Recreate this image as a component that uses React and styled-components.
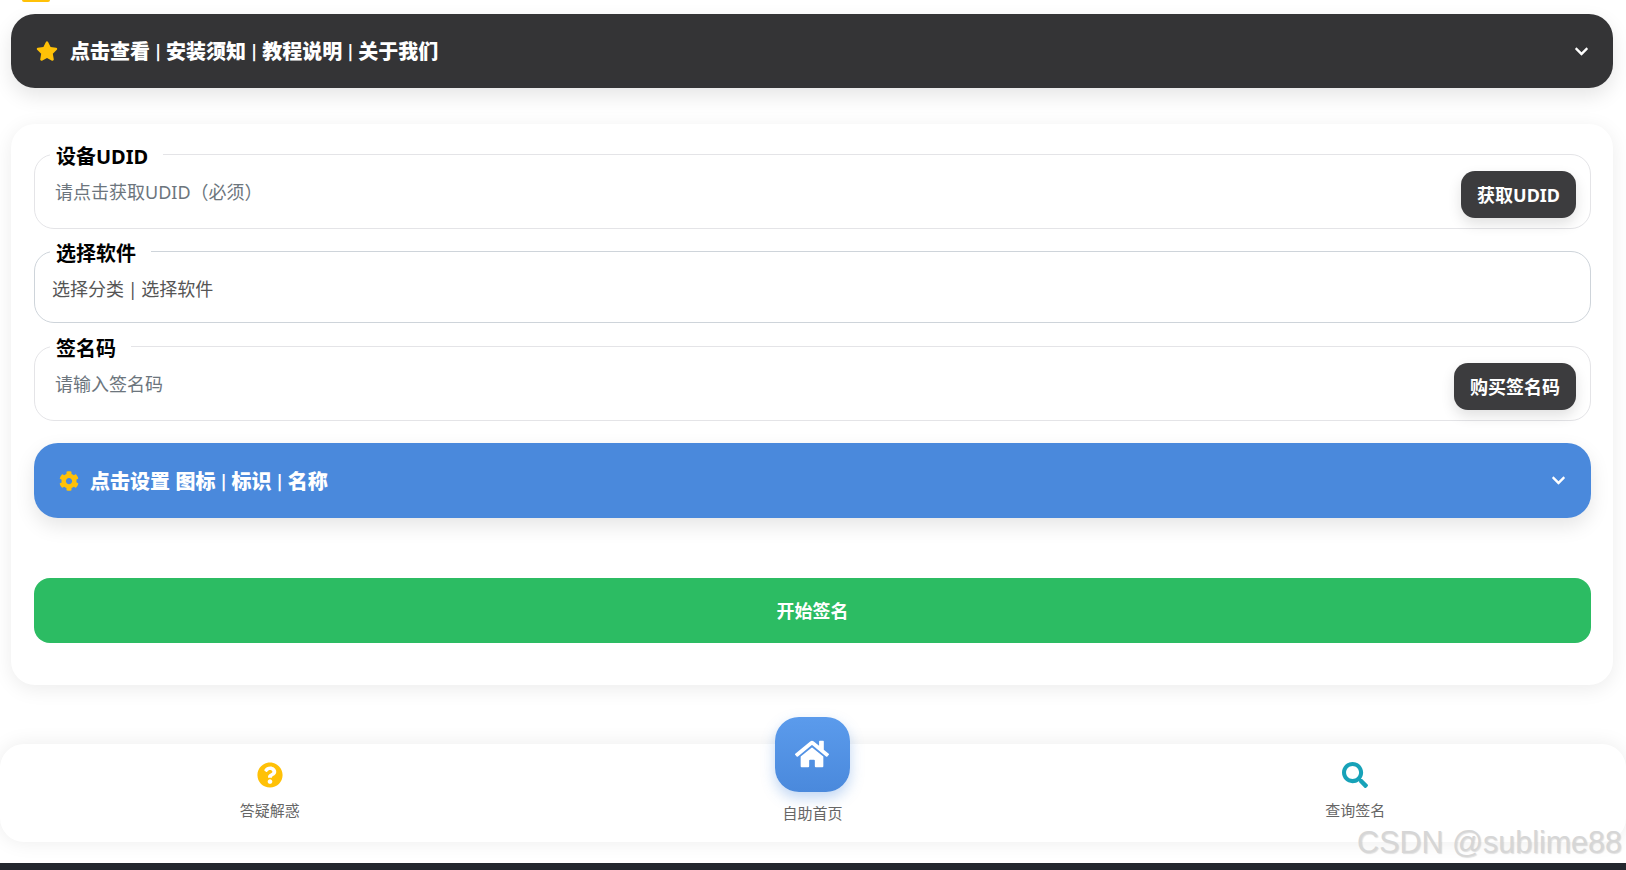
import React from 'react';
import styled, { createGlobalStyle } from 'styled-components';
import { FaChevronDown, FaCog, FaHome, FaQuestionCircle, FaSearch, FaStar } from 'react-icons/fa';

const GlobalStyle = createGlobalStyle`
  html, body {
    margin: 0;
    padding: 0;
    height: 100%;
    overflow: hidden;
    background: #fff;
  }
  body {
    font-family: 'Noto Sans', 'Noto Sans CJK SC', sans-serif;
  }
  * {
    box-sizing: border-box;
  }
`;

const Page = styled.div`
  position: relative;
  display: flex;
  flex-direction: column;
  height: 870px;
  overflow: hidden;
`;

const TopChip = styled.div`
  width: 28px;
  height: 2px;
  margin-left: 22px;
  border-radius: 0 0 4px 4px;
  background: #ffc107;
`;

const Accordion = styled.div`
  display: flex;
  align-items: center;
  height: 75px;
  flex-shrink: 0;
  padding: 0 25px;
  border-radius: 24px;
  background: ${props => props.$bg};
  box-shadow: 0 8px 20px rgba(0, 0, 0, 0.1);
  color: #fff;
`;

const TopBar = styled(Accordion)`
  height: 74px;
  margin: 12px 13px 36px 11px;
  padding: 0 24px 0 25px;
`;

const AccordionTitle = styled.span`
  flex: 1;
  margin-left: ${props => props.$gap}px;
  padding-top: 2px;
  font-family: Roboto, 'Noto Sans CJK SC', sans-serif;
  font-size: 20px;
  font-weight: 900;
  line-height: 26px;
  word-spacing: 0.5px;
`;

const LeadIcon = styled.span`
  display: flex;
  color: #ffc107;
  font-size: ${props => props.$size}px;
`;

const Chevron = styled(FaChevronDown)`
  width: 15px;
  height: 15px;
`;

const Card = styled.main`
  display: flex;
  flex-direction: column;
  height: 561px;
  flex-shrink: 0;
  margin: 0 13px 0 11px;
  padding: 17px 22px 0 23px;
  border-radius: 24px;
  background: #fff;
  box-shadow: 0 4px 20px rgba(0, 0, 0, 0.08);
`;

const Field = styled.fieldset`
  height: ${props => props.$height}px;
  flex-shrink: 0;
  min-width: 0;
  margin: 0 0 ${props => props.$after}px;
  padding: 0 14px 0 0;
  border: 1px solid ${props => props.$border};
  border-radius: 20px;
`;

const FieldLabel = styled.legend`
  margin-left: 15px;
  padding: 6px 15px 0 6px;
  color: #000;
  font-size: 20px;
  font-weight: 700;
  line-height: 20px;
`;

const FieldRow = styled.div`
  display: flex;
  align-items: flex-start;
  justify-content: space-between;
  padding-left: ${props => props.$inset}px;
`;

const FieldText = styled.span`
  margin-top: 13px;
  color: ${props => props.$color};
  font-size: 18px;
  line-height: 24px;
  word-spacing: -1px;
`;

const SideButton = styled.button`
  height: 47px;
  margin-top: 4px;
  padding: 0 16px 2px;
  border: none;
  border-radius: 14px;
  background: #3c3c3e;
  box-shadow: 0 6px 14px rgba(0, 0, 0, 0.12);
  color: #fff;
  font-family: inherit;
  font-size: 18px;
  font-weight: 700;
`;

const SettingsBar = styled(Accordion)`
  margin-top: 13px;
`;

const StartButton = styled.button`
  height: 65px;
  flex-shrink: 0;
  margin-top: 60px;
  padding-bottom: 2px;
  border: none;
  border-radius: 16px;
  background: #2cbc63;
  color: #fff;
  font-family: inherit;
  font-size: 18px;
  font-weight: 700;
`;

const BottomNav = styled.nav`
  display: flex;
  justify-content: space-around;
  height: 98px;
  flex-shrink: 0;
  margin-top: 59px;
  padding: 0 3px 0 2px;
  border-radius: 24px;
  background: #fff;
  box-shadow: 0 0 20px rgba(0, 0, 0, 0.08);
`;

const NavItem = styled.div`
  display: flex;
  flex-direction: column;
  align-items: center;
  padding-top: 18px;
`;

const NavIcon = styled.span`
  display: flex;
  color: ${props => props.$color};
  font-size: 26px;
`;

const NavLabel = styled.span`
  margin-top: ${props => props.$top}px;
  color: #666;
  font-size: 15px;
  line-height: 20px;
`;

const HomeButton = styled.div`
  display: flex;
  align-items: center;
  justify-content: center;
  width: 75px;
  height: 75px;
  margin-top: -45px;
  padding-bottom: 2px;
  border-radius: 24px;
  background: linear-gradient(180deg, #5b9bec, #4a89dc);
  box-shadow: 0 6px 14px rgba(74, 137, 220, 0.35);
  color: #fff;
  font-size: 34px;
`;

const FooterStrip = styled.div`
  flex: 1;
  margin-top: 21px;
  background: #23272e;
`;

const Watermark = styled.span`
  position: absolute;
  right: 4px;
  bottom: 10px;
  color: #d6d6d6;
  font-family: 'Liberation Sans', Arial, sans-serif;
  font-size: 30.5px;
  line-height: 36px;
  text-shadow: 1px 1px 1px rgba(0, 0, 0, 0.12);
  white-space: nowrap;
`;

function App() {
  return (
    <Page>
      <GlobalStyle />
      <TopChip />
      <TopBar $bg="#343436">
        <LeadIcon $size={22}>
          <FaStar />
        </LeadIcon>
        <AccordionTitle $gap={12}>点击查看 | 安装须知 | 教程说明 | 关于我们</AccordionTitle>
        <Chevron />
      </TopBar>

      <Card>
        <Field $height={88} $after={9} $border="#e4e4e7">
          <FieldLabel>设备UDID</FieldLabel>
          <FieldRow $inset={20}>
            <FieldText $color="#6c757d">请点击获取UDID（必须）</FieldText>
            <SideButton>获取UDID</SideButton>
          </FieldRow>
        </Field>

        <Field $height={85} $after={10} $border="#ced4da">
          <FieldLabel>选择软件</FieldLabel>
          <FieldRow $inset={17}>
            <FieldText $color="#555">选择分类 | 选择软件</FieldText>
          </FieldRow>
        </Field>

        <Field $height={88} $after={9} $border="#e4e4e7">
          <FieldLabel>签名码</FieldLabel>
          <FieldRow $inset={20}>
            <FieldText $color="#6c757d">请输入签名码</FieldText>
            <SideButton>购买签名码</SideButton>
          </FieldRow>
        </Field>

        <SettingsBar $bg="#4a89dc">
          <LeadIcon $size={20}>
            <FaCog />
          </LeadIcon>
          <AccordionTitle $gap={11}>点击设置 图标 | 标识 | 名称</AccordionTitle>
          <Chevron />
        </SettingsBar>

        <StartButton>开始签名</StartButton>
      </Card>

      <BottomNav>
        <NavItem>
          <NavIcon $color="#ffc107">
            <FaQuestionCircle />
          </NavIcon>
          <NavLabel $top={12}>答疑解惑</NavLabel>
        </NavItem>
        <NavItem>
          <HomeButton>
            <FaHome />
          </HomeButton>
          <NavLabel $top={11}>自助首页</NavLabel>
        </NavItem>
        <NavItem>
          <NavIcon $color="#17a2b8">
            <FaSearch />
          </NavIcon>
          <NavLabel $top={12}>查询签名</NavLabel>
        </NavItem>
      </BottomNav>

      <FooterStrip />
      <Watermark>CSDN @sublime88</Watermark>
    </Page>
  );
}

export default App;
